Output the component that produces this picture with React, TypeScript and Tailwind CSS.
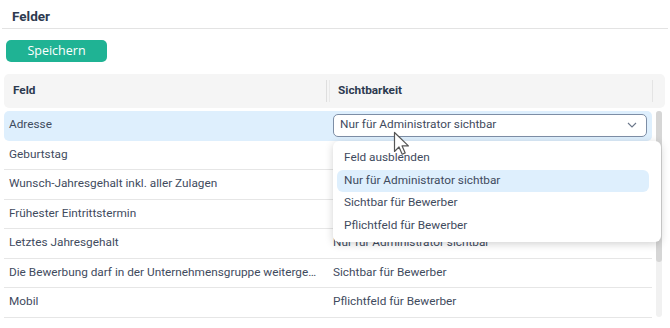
import React from 'react';

const rows: { label: string; value: string }[] = [
  { label: 'Adresse', value: '' },
  { label: 'Geburtstag', value: '' },
  { label: 'Wunsch-Jahresgehalt inkl. aller Zulagen', value: '' },
  { label: 'Frühester Eintrittstermin', value: '' },
  { label: 'Letztes Jahresgehalt', value: 'Nur für Administrator sichtbar' },
  { label: 'Die Bewerbung darf in der Unternehmensgruppe weiterge…', value: 'Sichtbar für Bewerber' },
  { label: 'Mobil', value: 'Pflichtfeld für Bewerber' },
];

const options = ['Feld ausblenden', 'Nur für Administrator sichtbar', 'Sichtbar für Bewerber', 'Pflichtfeld für Bewerber'];

export default function App() {
  return (
    <div className="relative w-[670px] h-[328px] overflow-hidden bg-white font-['Roboto',sans-serif] text-[11.8px] text-[#3f4b5e]">
      <div className="mx-[2px] h-[29px] border-b border-[#e3e3e3] pl-[10px] pt-[9px]">
        <span className="text-[13.5px] font-bold text-[#2d3a50] leading-none">Felder</span>
      </div>

      <div className="mt-[11px] ml-[6px] w-[101px] h-[22px] rounded-[5px] bg-[#1fb394] flex items-center justify-center text-white text-[12.5px] font-['Open_Sans',sans-serif]">
        Speichern
      </div>

      <div className="mt-[12px] ml-[4px] w-[661px]">
        <div className="h-[34px] rounded-[5px] bg-[#f5f5f5] flex items-center font-bold text-[#2d3a50]">
          <div className="w-[322px] pl-[9px]">Feld</div>
          <div className="w-[1px] h-[22px] bg-[#dedede] mr-[2px]" />
          <div className="w-[1px] h-[22px] bg-[#e9e9e9]" />
          <div className="flex-1 pl-[8px]">Sichtbarkeit</div>
          <div className="w-[1px] h-[22px] bg-[#e4e4e4] mr-[12px]" />
        </div>

        <div className="flex mt-[3px]">
          <div className="w-[648px]">
            {rows.map((r, i) => (
              <div
                key={r.label}
                className={`h-[29.5px] flex items-center border-b ${i === 0 ? 'bg-[#deeffd] rounded-[5px] border-transparent' : 'border-[#e6e6e6]'}`}
              >
                <div className="w-[322px] pl-[5px] pr-[4px] whitespace-nowrap">{r.label}</div>
                <div className="flex-1 pl-[7px]">
                  {i === 0 ? (
                    <div className="w-[314px] h-[23px] rounded-[5px] border border-[#7d8ea6] bg-white flex items-center justify-between pl-[6px] pr-[9px]">
                      <span>Nur für Administrator sichtbar</span>
                      <svg width="10" height="6" viewBox="0 0 10 6" fill="none">
                        <path d="M1 1l4 4 4-4" stroke="#6b778a" strokeWidth="1.1" />
                      </svg>
                    </div>
                  ) : (
                    <span>{r.value}</span>
                  )}
                </div>
              </div>
            ))}
          </div>
          <div className="ml-[4px] w-[6px] h-[206px] bg-[#f1f1f1] rounded-[3px]">
            <div className="h-[151px] bg-[#d6d6d6] rounded-[3px]" />
          </div>
        </div>
      </div>

      <div className="absolute left-[333px] top-[141px] w-[328px] h-[101px] bg-white rounded-[6px] shadow-[0_2px_8px_rgba(0,0,0,0.18)] pt-[6px] pl-[4px] pr-[12px]">
        {options.map((o, i) => (
          <div
            key={o}
            className={`h-[22.5px] flex items-center pl-[7px] rounded-[6px] ${i === 1 ? 'bg-[#deeffd]' : ''}`}
          >
            {o}
          </div>
        ))}
      </div>

      <svg className="absolute left-[393px] top-[131px]" width="18" height="26" viewBox="0 0 18 26">
        <path d="M1.5 1.5v19l4.5-4.5 3.2 7.2 3-1.3-3.1-7h6.3z" fill="#fff" stroke="#555" strokeWidth="1.2" strokeLinejoin="round" />
      </svg>
    </div>
  );
}
